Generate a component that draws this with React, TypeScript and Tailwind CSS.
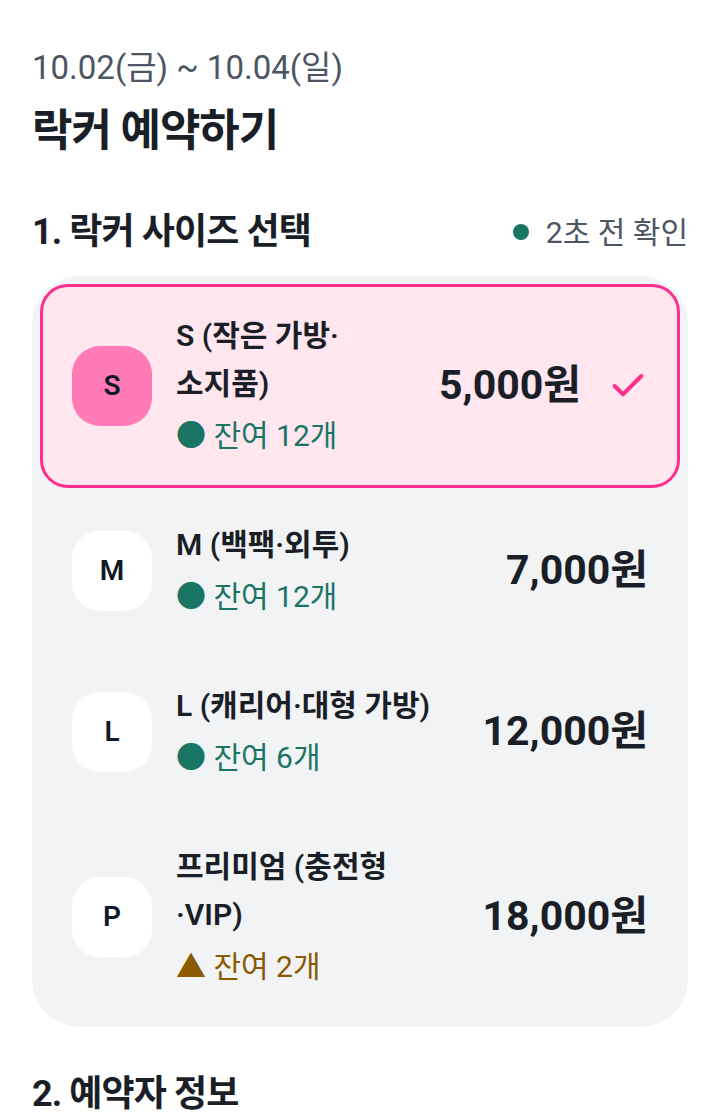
import { Check } from 'lucide-react'

type Locker = {
  code: string
  name: string
  stock: string
  price: string
  low?: boolean
  selected?: boolean
}

const LOCKERS: Locker[] = [
  { code: 'S', name: 'S (작은 가방·소지품)', stock: '잔여 12개', price: '5,000원', selected: true },
  { code: 'M', name: 'M (백팩·외투)', stock: '잔여 12개', price: '7,000원' },
  { code: 'L', name: 'L (캐리어·대형 가방)', stock: '잔여 6개', price: '12,000원' },
  { code: 'P', name: '프리미엄 (충전형·VIP)', stock: '잔여 2개', price: '18,000원', low: true },
]

const LockerRow = ({ item }: { item: Locker }) => (
  <div
    className={
      item.selected
        ? 'flex items-center gap-8 rounded-[28px] border-[3px] border-[#ff2d8b] bg-[#ffe6ef] px-[29px] py-[25px]'
        : 'flex items-center gap-8 rounded-[28px] border-[3px] border-transparent px-[29px] py-[25px]'
    }
  >
    <div
      className={
        item.selected
          ? '-mr-2 flex h-20 w-20 shrink-0 items-center justify-center rounded-[28px] bg-[#ff7ab6] text-[28px] font-semibold text-[#111827]'
          : '-mr-2 flex h-20 w-20 shrink-0 items-center justify-center rounded-[28px] bg-white text-[28px] font-semibold text-[#111827]'
      }
    >
      {item.code}
    </div>
    <div className="flex min-w-0 flex-1 flex-col break-keep">
      <p className="text-[30px] leading-[48px] font-semibold text-[#1a1f27]">
        {item.name}
      </p>
      <p
        className={
          item.low
            ? 'mt-[4px] text-[30px] leading-[48px] text-[#8a5a00]'
            : 'mt-[4px] text-[30px] leading-[48px] text-[#1b7565]'
        }
      >
        {item.low ? '▲' : '●'} {item.stock}
      </p>
    </div>
    <div className="flex shrink-0 items-center gap-[27px]">
      <span className="text-[41px] font-bold text-[#1a1f27]">{item.price}</span>
      {item.selected && (
        <Check className="h-10 w-10 text-[#ff2d8b]" strokeWidth={2.4} />
      )}
    </div>
  </div>
)

export default function App() {
  return (
    <div className="min-h-screen bg-white px-8 pt-[46px] font-['Roboto','Noto_Sans_CJK_KR',sans-serif] text-[#1a1f27]">
      <p className="text-[33px] leading-[44px] text-[#4b5563]">10.02(금) ~ 10.04(일)</p>
      <h1 className="mt-[13px] text-[44px] leading-[56px] font-bold tracking-tight">
        락커 예약하기
      </h1>

      <div className="mt-[49px] flex items-center justify-between">
        <h2 className="text-[36px] leading-[48px] font-bold tracking-tight">
          1. 락커 사이즈 선택
        </h2>
        <div className="flex items-center gap-[17px] text-[30px] text-[#4b5563]">
          <span className="h-4 w-4 rounded-full bg-[#1b7565]" />
          <span>2초 전 확인</span>
        </div>
      </div>

      <div className="mt-[20px] flex flex-col gap-[5px] rounded-[48px] bg-[#f2f3f5] p-2">
        {LOCKERS.map((item) => (
          <LockerRow key={item.code} item={item} />
        ))}
      </div>

      <h2 className="mt-[43px] text-[36px] leading-[48px] font-bold tracking-tight">
        2. 예약자 정보
      </h2>
    </div>
  )
}
